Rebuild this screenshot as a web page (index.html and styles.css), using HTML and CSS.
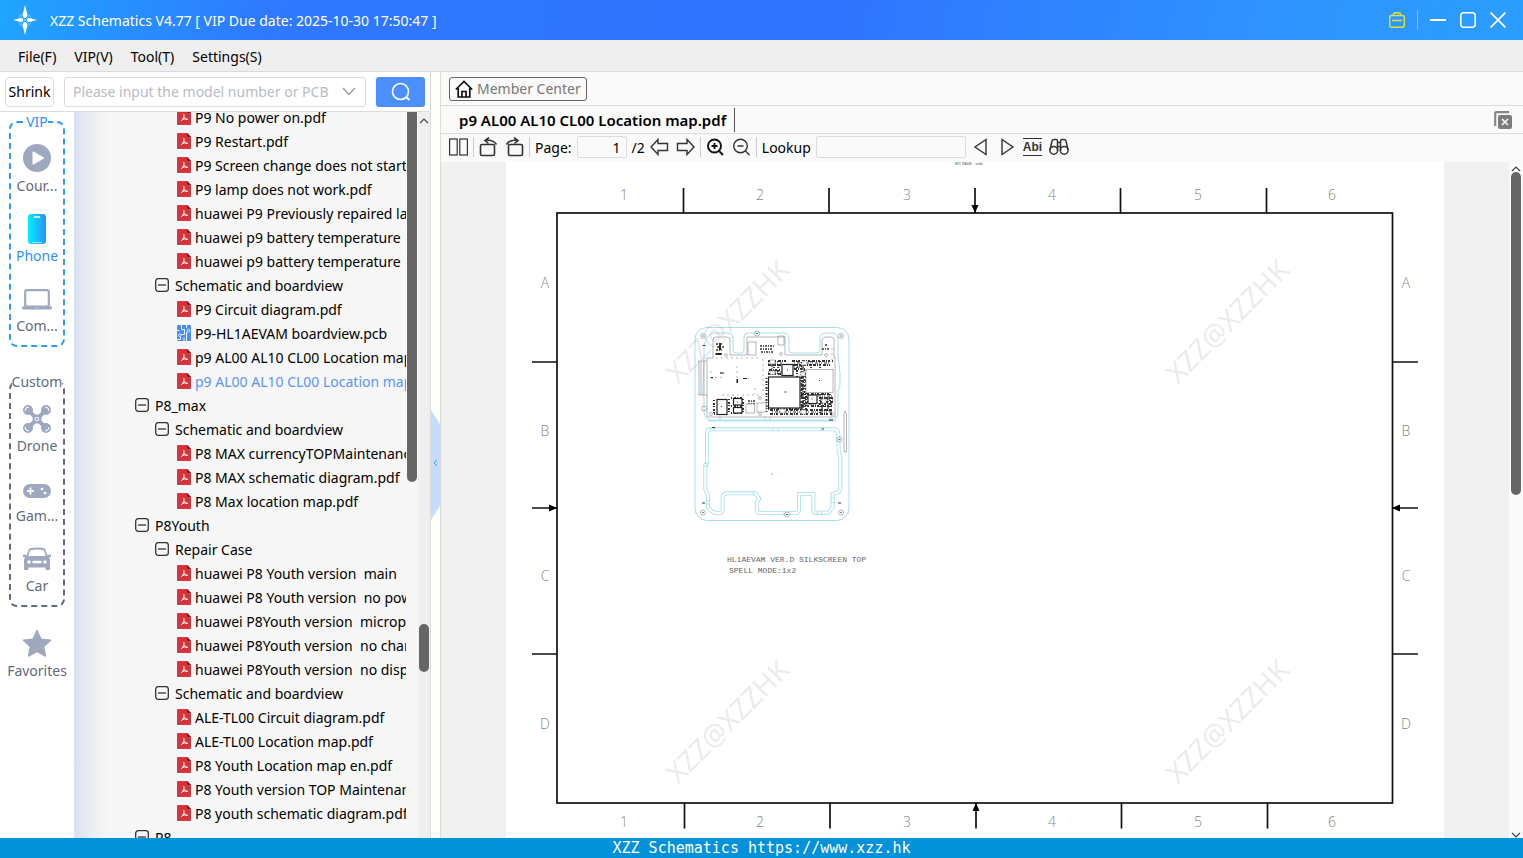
FILE: index.html
```html
<!DOCTYPE html>
<html lang="en">
<head>
  <meta charset="UTF-8">
  <meta name="viewport" content="width=device-width, initial-scale=1.0">
  <title>XZZ Schematics</title>
  <link rel="stylesheet" href="styles.css">
</head>
<body>

  <!-- Shared icons -->
  <svg class="icon-defs" width="0" height="0" aria-hidden="true">
    <symbol id="pdf" viewBox="0 0 14 16">
      <path d="M1 0H10L14 4V15Q14 16 13 16H1Q0 16 0 15V1Q0 0 1 0Z" fill="#d4343c"/>
      <path d="M10 0L14 4H11Q10 4 10 3Z" fill="#8e1118"/>
      <path d="M6.500 5Q7.500 5.500 6.800 8Q6 10.500 4 12M6.900 8Q8 10.200 10.800 10.500M5 10.800Q7.500 9.500 10.500 10.200" fill="none" stroke="#fff" stroke-width=".9"/>
    </symbol>
    <symbol id="pcb" viewBox="0 0 14 16">
      <rect width="14" height="16" rx="1" fill="#4a8ff8"/>
      <path d="M4.500 0V4.500H7.500V9.500H4M0 5.500H2.500M9.500 0V3M10.500 7.500H9.500V16M7 16V12.500M0 14.500H3.500V12" fill="none" stroke="#fff" stroke-width=".9"/>
      <circle cx="2.800" cy="10.300" r="1.200" fill="none" stroke="#fff" stroke-width=".8"/>
      <circle cx="11.500" cy="5.500" r="1.200" fill="none" stroke="#fff" stroke-width=".8"/>
    </symbol>
    <symbol id="minus" viewBox="0 0 14 14">
      <rect x=".7" y=".7" width="12.600" height="12.600" rx="2.500" fill="none" stroke="#333" stroke-width="1.300"/>
      <path d="M3 7H11" stroke="#333" stroke-width="1.300"/>
    </symbol>
    <symbol id="up" viewBox="0 0 10 6"><path d="M1 5L5 1L9 5" fill="none" stroke="#444" stroke-width="1.200"/></symbol>
    <symbol id="down" viewBox="0 0 10 6"><path d="M1 1L5 5L9 1" fill="none" stroke="#444" stroke-width="1.200"/></symbol>
  </svg>

  <div class="app">
    <header class="titlebar">
      <svg class="logo" width="26" height="30" viewBox="0 0 26 30">
        <circle cx="13" cy="15" r="6.500" fill="none" stroke="#8fd0ff" stroke-width="1" opacity=".7"/>
        <path d="M8 10L18 20M18 10L8 20" stroke="#8fd0ff" opacity=".7"/>
        <path d="M13 0L15.500 10L14 13H12L10.500 10ZM13 30L15.500 20L14 17H12L10.500 20ZM1 15L9 13L11 14V16L9 17ZM25 15L17 13L15 14V16L17 17Z" fill="#fff"/>
      </svg>
      <h1>XZZ Schematics V4.77 [ VIP Due date: 2025-10-30 17:50:47 ]</h1>
      <button class="win-btn" aria-label="Toolbox">
        <svg width="16" height="16" viewBox="0 0 16 16" fill="none" stroke="#dfe23c" stroke-width="1.400"><rect x=".7" y="3.500" width="14.600" height="11.800" rx="2"/><path d="M4.500 3.500V2.500Q4.500 .8 6 .8H10Q11.500 .8 11.500 2.500V3.500M3 8.500H13"/></svg>
      </button>
      <span class="win-line"></span>
      <button class="win-btn" aria-label="Minimize">
        <svg width="16" height="16" viewBox="0 0 16 16"><path d="M0 8H16" stroke="#fff" stroke-width="2"/></svg>
      </button>
      <button class="win-btn" aria-label="Maximize">
        <svg width="16" height="16" viewBox="0 0 16 16"><rect x=".8" y=".8" width="14.400" height="14.400" rx="3" fill="none" stroke="#fff" stroke-width="1.500"/></svg>
      </button>
      <button class="win-btn" aria-label="Close">
        <svg width="16" height="16" viewBox="0 0 16 16"><path d="M.5 .5L15.500 15.500M15.500 .5L.5 15.500" stroke="#fff" stroke-width="1.700"/></svg>
      </button>
    </header>

    <nav class="menubar">
      <button>File(F)</button>
      <button>VIP(V)</button>
      <button>Tool(T)</button>
      <button>Settings(S)</button>
    </nav>

    <main class="workspace">
      <section class="sidebar">
        <form class="search">
          <button type="button" class="shrink">Shrink</button>
          <div class="combo">
            <input type="text" placeholder="Please input the model number or PCB" aria-label="Model number">
            <button type="button" aria-label="Show history">
              <svg width="14" height="9" viewBox="0 0 14 9"><path d="M1 1L7 7.500L13 1" fill="none" stroke="#9a9ea8" stroke-width="1.500"/></svg>
            </button>
          </div>
          <button type="button" class="search-btn" aria-label="Search">
            <svg width="20" height="20" viewBox="0 0 20 20" fill="none" stroke="#fff" stroke-width="1.600"><circle cx="9.500" cy="9.500" r="8"/><path d="M15 15L18.500 18" stroke-width="2"/></svg>
          </button>
        </form>

        <div class="sidebar-body">
          <div class="rail">
            <fieldset class="group vip">
              <legend>VIP</legend>
              <button>
                <svg width="30" height="30" viewBox="0 0 30 30"><circle cx="15" cy="14" r="14" fill="#9ea8bf"/><path d="M10.500 8.500Q10.500 7 12 7.800L21.500 13.300Q22.500 14 21.500 14.800L12 20.300Q10.500 21 10.500 19.500Z" fill="#fff"/></svg>
                <span>Cour...</span>
              </button>
              <button class="active">
                <svg width="30" height="30" viewBox="0 0 30 30"><defs><linearGradient id="ph"><stop offset="0" stop-color="#00f0ff"/><stop offset="1" stop-color="#2e90fa"/></linearGradient></defs><rect x="6" width="18" height="30" rx="3" fill="url(#ph)"/><path d="M12.500 3H17.500" stroke="#fff" stroke-width="1.500" stroke-linecap="round"/><path d="M10 28.500H20" stroke="#a9dcff"/></svg>
                <span>Phone</span>
              </button>
              <button>
                <svg width="30" height="30" viewBox="0 0 30 30"><rect x="3.200" y="6.200" width="23.600" height="16.500" rx="1.500" fill="none" stroke="#9ea8bf" stroke-width="2.200"/><path d="M0 22.500H12L13 24H17L18 22.500H30V24Q30 25.500 28 25.500H2Q0 25.500 0 24Z" fill="#9ea8bf"/></svg>
                <span>Com...</span>
              </button>
            </fieldset>

            <fieldset class="group custom">
              <legend>Custom</legend>
              <button>
                <svg width="30" height="30" viewBox="0 0 30 30" fill="#9ea8bf">
                  <path d="M7 7L15 15L23 7M7 23L15 15L23 23" fill="none" stroke="#9ea8bf" stroke-width="4"/>
                  <circle cx="6" cy="6" r="5"/><circle cx="24" cy="6" r="5"/><circle cx="6" cy="24" r="5"/><circle cx="24" cy="24" r="5"/>
                  <circle cx="15" cy="15" r="4.500"/>
                  <g fill="none" stroke="#fff" stroke-width="1"><circle cx="15" cy="15" r="1.800"/><path d="M3 7A4 4 0 0 1 7 3M23 3A4 4 0 0 1 27 7M3 23A4 4 0 0 0 7 27M23 27A4 4 0 0 0 27 23"/></g>
                </svg>
                <span>Drone</span>
              </button>
              <button>
                <svg width="30" height="30" viewBox="0 0 30 30"><rect x="1" y="10" width="28" height="14" rx="7" fill="#9ea8bf"/><path d="M5 17H12M8.500 13.500V20.500" stroke="#fff" stroke-width="1.800"/><circle cx="20" cy="15" r="1.300" fill="#fff"/><circle cx="23" cy="19" r="1.300" fill="#fff"/></svg>
                <span>Gam...</span>
              </button>
              <button>
                <svg width="30" height="30" viewBox="0 0 30 30"><path fill-rule="evenodd" d="M8.500 4Q15 3 21.500 4Q23 4.300 23.600 6L25.200 11L29 10.500V13H27Q28 14.500 28 17V25Q28 26 27 26H24.500Q23.500 26 23.500 25V23.500H6.500V25Q6.500 26 5.500 26H3Q2 26 2 25V17Q2 14.500 3 13H1V10.500L4.800 11L6.400 6Q7 4.300 8.500 4ZM9 6Q8 6.200 7.700 7.200L6.300 12H23.700L22.300 7.200Q22 6.200 21 6Q15 5.200 9 6Z" fill="#9ea8bf"/><circle cx="7" cy="18" r="1.700" fill="#fff"/><circle cx="23" cy="18" r="1.700" fill="#fff"/><path d="M11.500 18H18.500" stroke="#fff" stroke-width="2.500" stroke-linecap="round"/></svg>
                <span>Car</span>
              </button>
            </fieldset>

            <button class="favorites">
              <svg width="30" height="30" viewBox="0 0 30 30"><path d="M15 1.500L19 10.200L28.500 11.300L21.500 17.700L23.400 27L15 22.400L6.600 27L8.500 17.700L1.500 11.300L11 10.200Z" fill="#9ea8bf" stroke="#9ea8bf" stroke-width="1.500" stroke-linejoin="round"/></svg>
              <span>Favorites</span>
            </button>
          </div>

          <ul class="tree">
            <li class="file"><svg><use href="#pdf"/></svg>P9 No power on.pdf</li>
            <li class="file"><svg><use href="#pdf"/></svg>P9 Restart.pdf</li>
            <li class="file"><svg><use href="#pdf"/></svg>P9 Screen change does not start up.pdf</li>
            <li class="file"><svg><use href="#pdf"/></svg>P9 lamp does not work.pdf</li>
            <li class="file"><svg><use href="#pdf"/></svg>huawei P9 Previously repaired lamp.pdf</li>
            <li class="file"><svg><use href="#pdf"/></svg>huawei p9 battery temperature</li>
            <li class="file"><svg><use href="#pdf"/></svg>huawei p9 battery temperature</li>
            <li class="folder"><svg><use href="#minus"/></svg>Schematic and boardview</li>
            <li class="file"><svg><use href="#pdf"/></svg>P9 Circuit diagram.pdf</li>
            <li class="file"><svg><use href="#pcb"/></svg>P9-HL1AEVAM boardview.pcb</li>
            <li class="file"><svg><use href="#pdf"/></svg>p9 AL00 AL10 CL00 Location map.pdf</li>
            <li class="file selected"><svg><use href="#pdf"/></svg>p9 AL00 AL10 CL00 Location map.pdf</li>
            <li class="model"><svg><use href="#minus"/></svg>P8_max</li>
            <li class="folder"><svg><use href="#minus"/></svg>Schematic and boardview</li>
            <li class="file"><svg><use href="#pdf"/></svg>P8 MAX currencyTOPMaintenance.pdf</li>
            <li class="file"><svg><use href="#pdf"/></svg>P8 MAX schematic diagram.pdf</li>
            <li class="file"><svg><use href="#pdf"/></svg>P8 Max location map.pdf</li>
            <li class="model"><svg><use href="#minus"/></svg>P8Youth</li>
            <li class="folder"><svg><use href="#minus"/></svg>Repair Case</li>
            <li class="file"><svg><use href="#pdf"/></svg>huawei P8 Youth version&nbsp; main</li>
            <li class="file"><svg><use href="#pdf"/></svg>huawei P8 Youth version&nbsp; no power.pdf</li>
            <li class="file"><svg><use href="#pdf"/></svg>huawei P8Youth version&nbsp; microphone.pdf</li>
            <li class="file"><svg><use href="#pdf"/></svg>huawei P8Youth version&nbsp; no charge.pdf</li>
            <li class="file"><svg><use href="#pdf"/></svg>huawei P8Youth version&nbsp; no display.pdf</li>
            <li class="folder"><svg><use href="#minus"/></svg>Schematic and boardview</li>
            <li class="file"><svg><use href="#pdf"/></svg>ALE-TL00 Circuit diagram.pdf</li>
            <li class="file"><svg><use href="#pdf"/></svg>ALE-TL00 Location map.pdf</li>
            <li class="file"><svg><use href="#pdf"/></svg>P8 Youth Location map en.pdf</li>
            <li class="file"><svg><use href="#pdf"/></svg>P8 Youth version TOP Maintenance.pdf</li>
            <li class="file"><svg><use href="#pdf"/></svg>P8 youth schematic diagram.pdf</li>
            <li class="model"><svg><use href="#minus"/></svg>P8</li>
          </ul>

          <div class="inner-scroll"><div class="thumb"></div></div>
          <div class="outer-scroll">
            <svg width="10" height="6"><use href="#up"/></svg>
            <div class="thumb"></div>
          </div>
        </div>
      </section>

      <div class="splitter">
        <button aria-label="Collapse sidebar">
          <svg width="9" height="110" viewBox="0 0 9 110"><path d="M0 0L9 14V96L0 110Z" fill="#c5ddfb"/><path d="M6 50L3 53L6 56" fill="none" stroke="#4a8ff8"/></svg>
        </button>
      </div>

      <section class="viewer">
        <div class="member-row">
          <button class="member">
            <svg width="18" height="18" viewBox="0 0 18 18" fill="none" stroke="#111" stroke-width="1.700"><path d="M.8 9.500L9 1.500L17.200 9.500M3.200 8V17H14.800V8M7 17V11.500H11V17"/></svg>
            Member Center
          </button>
        </div>

        <div class="tabs">
          <button class="tab">p9 AL00 AL10 CL00 Location map.pdf</button>
          <button class="close-all" aria-label="Close all tabs">
            <svg width="19" height="18" viewBox="0 0 19 18"><path d="M1.200 15V2.200Q1.200 1.200 2.200 1.200H15" fill="none" stroke="#868686" stroke-width="2.200"/><rect x="4" y="4" width="14" height="14" rx="2" fill="#7c7c7c"/><path d="M8 8L14 14M14 8L8 14" stroke="#fff" stroke-width="1.500"/></svg>
          </button>
        </div>

        <div class="toolbar">
          <button aria-label="Two pages"><svg width="19" height="18" viewBox="0 0 19 18" fill="none" stroke="#333" stroke-width="1.200"><rect x=".6" y="1" width="7.600" height="16"/><rect x="10.800" y="1" width="7.600" height="16"/></svg></button>
          <span class="sep"></span>
          <div class="tool-group">
            <button aria-label="Rotate left"><svg width="19" height="20" viewBox="0 0 19 20" fill="none" stroke="#333" stroke-width="1.600"><rect x="1.500" y="7.500" width="14" height="11" rx="1.500"/><path d="M6 3.500Q14 2 17.500 7.500M10 .5L6 3.500L9.500 6.500"/></svg></button>
            <button aria-label="Rotate right"><svg width="19" height="20" viewBox="0 0 19 20" fill="none" stroke="#333" stroke-width="1.600"><rect x="3.500" y="7.500" width="14" height="11" rx="1.500"/><path d="M13 3.500Q5 2 1.500 7.500M9 .5L13 3.500L9.500 6.500"/></svg></button>
          </div>
          <span class="sep"></span>
          <label for="page">Page:</label>
          <input id="page" class="page-input" type="text" value="1">
          <span class="total">/2</span>
          <div class="tool-group">
            <button aria-label="Previous page"><svg width="19" height="18" viewBox="0 0 19 18" fill="none" stroke="#333" stroke-width="1.400"><path d="M1 9L8 1.500V5.500H17.500V12.500H8V16.500Z"/></svg></button>
            <button aria-label="Next page"><svg width="19" height="18" viewBox="0 0 19 18" fill="none" stroke="#333" stroke-width="1.400"><path d="M18 9L11 1.500V5.500H1.500V12.500H11V16.500Z"/></svg></button>
          </div>
          <span class="sep"></span>
          <div class="tool-group">
            <button aria-label="Zoom in"><svg width="19" height="18" viewBox="0 0 19 18" fill="none" stroke="#111" stroke-width="1.900"><circle cx="8.500" cy="8" r="6.500"/><path d="M13 12.800L17 17M5.500 8H11.500M8.500 5V11"/></svg></button>
            <button aria-label="Zoom out"><svg width="19" height="18" viewBox="0 0 19 18" fill="none" stroke="#333" stroke-width="1.400"><circle cx="8.500" cy="8" r="6.800"/><path d="M13.300 12.800L17.500 17M5.500 8H11.500"/></svg></button>
          </div>
          <span class="sep"></span>
          <label for="lookup">Lookup</label>
          <input id="lookup" class="lookup-input" type="text">
          <div class="tool-group find">
            <button aria-label="Find previous"><svg width="19" height="18" viewBox="0 0 19 18"><path d="M15 1.500V16.500L4 9Z" fill="none" stroke="#333" stroke-width="1.400"/></svg></button>
            <button aria-label="Find next"><svg width="19" height="18" viewBox="0 0 19 18"><path d="M5 1.500V16.500L16 9Z" fill="none" stroke="#333" stroke-width="1.400"/></svg></button>
            <button class="abi">Abi</button>
            <button aria-label="Find all"><svg width="20" height="18" viewBox="0 0 20 18" fill="none" stroke="#333" stroke-width="1.500"><circle cx="4.800" cy="12.300" r="3.900"/><circle cx="15.200" cy="12.300" r="3.900"/><path d="M1 12L3 3Q3.500 1.500 5 1.500H7Q8.500 1.500 8.500 3V13M19 12L17 3Q16.500 1.500 15 1.500H13Q11.500 1.500 11.500 3V13M8.500 4.500H11.500M8.500 8.500H11.500"/></svg></button>
          </div>
        </div>

        <div class="canvas">
          <div class="page-area">
            <!-- Drawing sheet -->
            <svg class="sheet" viewBox="506 162 938 676">
              <text x="969" y="165" class="tiny" text-anchor="middle">MT PAGE - side</text>

              <g class="frame">
                <rect x="557" y="213" width="835.500" height="590"/>
                <path d="M683.500 188V213M829 188V213M975 188V213M1120.500 188V213M1266.500 188V213"/>
                <path d="M684.500 803V828.500M830 803V828.500M976 803V828.500M1121.500 803V828.500M1267.500 803V828.500"/>
                <path d="M532 362H557M532 508H557M532 654H557M1392 362H1418M1392 508H1418M1392 654H1418"/>
              </g>
              <path d="M975 213L971.500 205H978.500ZM976 803L972.500 811H979.500ZM557 508L549 504.500V511.500ZM1392 508L1400 504.500V511.500Z"/>

              <g class="zone">
                <text x="624" y="200">1</text><text x="760" y="200">2</text><text x="907" y="200">3</text><text x="1052" y="200">4</text><text x="1198" y="200">5</text><text x="1332" y="200">6</text>
                <text x="624" y="827">1</text><text x="760" y="827">2</text><text x="907" y="827">3</text><text x="1052" y="827">4</text><text x="1198" y="827">5</text><text x="1332" y="827">6</text>
                <text x="545" y="288">A</text><text x="545" y="436">B</text><text x="545" y="581">C</text><text x="545" y="729">D</text>
                <text x="1406" y="288">A</text><text x="1406" y="436">B</text><text x="1406" y="581">C</text><text x="1406" y="729">D</text>
              </g>

              <!-- Panel outline -->
              <rect class="panel" x="695" y="327.500" width="154" height="193" rx="12"/>
              <path class="panel" d="M704 358V345Q708 333 714 333H728Q733 334 733 338V350Q733 353 736 353H741Q744 353 744 350V337Q744 333 748 333H784Q789 333 789 338V350Q789 353 792 353H816Q820 353 820 350V337Q821 333 826 333H833Q838 334 838 340V358L840 372V384Q840 388 838 390V412Q838 419 832 420H710Q704 419 704 412V398Q702 396 703 384Z"/>
              <path class="panel" d="M708 421H836M765 417V421M770 417V421M720 417V420M830 417V420"/>
              <defs>
                <path id="slot" d="M81 130V38Q81 28 92 28H462Q475 28 475 42V60L476 95L481 112V205Q480 217 470 218L458 222V262L445 278H408Q400 278 400 270V222H357V270Q356 279 348 279H245Q232 282 231 272V245L238 236L226 220H140Q128 222 128 232V268Q127 279 116 279H108Q96 278 84 262V225L76 208V135Z"/>
              </defs>
              <g transform="translate(680 420) scale(.3333)">
                <use href="#slot" class="slot"/>
                <use href="#slot" class="slot-in"/>
                <path class="panel-fine" d="M278 25V33M295 25V33M92 22V33M105 22V33M424 22V33M72 130H84M72 138H84M78 242H90M78 252H90M412 273V285M424 273V285M452 234H464M452 248H464M312 273V285M220 215V226"/>
              </g>

              <!-- Board -->
              <path class="board" d="M707 358H713V340Q713 337 716 337H727Q730 337 730 340V355H747V337H785V355H822V340Q823 337 826 337H831Q834 337 834 340V357H835V417H707Z"/>
              <path class="board" d="M698 361H707M698 395H707M699 361V395M701 361V395M704 361V395M748 342H756V355H748ZM778 336H784V345H778ZM844 452V414L845 411L846.500 414V452Z"/>
              <g class="marks">
                <circle cx="703" cy="336" r="2.500"/><circle cx="757" cy="333.500" r="2.500"/><circle cx="841" cy="336" r="2.500"/><circle cx="704" cy="408.500" r="2.500"/>
                <circle cx="703" cy="512.500" r="2.500"/><circle cx="841" cy="512.500" r="2.500"/><circle cx="787" cy="514.500" r="2.500"/><circle cx="839.500" cy="439.500" r="2.500"/>
                <circle cx="726" cy="355" r="1.500"/><circle cx="826" cy="355" r="1.500"/><circle cx="711" cy="414" r="1.500"/><circle cx="832" cy="414" r="1.500"/><circle cx="781" cy="354" r="1.500"/><circle cx="760" cy="398" r="1.500"/><circle cx="760" cy="414" r="1.500"/>
                <path d="M702 336H704M756 333.500H758M840 336H842M702 512.500H704M840 512.500H842M786 514.500H788M838.500 439.500H840.500" stroke="#222"/>
              </g>

              <!-- Dense small parts around the chips -->
              <g class="parts">
                <path stroke-dasharray="3 1 1 1 2 2" d="M768 361H786M768 365H781M769 370H780M768 374H782M792 361H833M793 365H830M794 369H805M801 374H806M801 377H806M801 381H806M801 385H806M801 389H806M801 394H830M801 398H808M801 402H808M801 406H832M770 410H832M770 414H832M820 398H833M820 402H833"/>
                <path stroke-dasharray="1 2 2 1" d="M766.500 378V412M801.500 362V412M804.500 370V412M806 393V414M820 394V414M825 394V412M830 394V412M774 361V375M778 361V375M797 361V377M811 361V369M820 361V369M768 409H801M714 400V413M729 399V413M743 399V413M731 398H743M731 406H743M731 413H743M714 414H728"/>
                <path stroke-dasharray="2 1 1 1" stroke-width="1.300" d="M716 344H722M717 347H725M716 350H722M718 354H722M760 346H774M760 349H772M761 352H774M822 349H830M825 345H828M748 401H755M748 404H755"/>
                <path stroke-dasharray="1 2 3 1 1 1" stroke-width="1.200" d="M768 363H782M794 363H830M794 367H806M768 372H782M806 396H832M820 400H833M806 404H833M772 412H832M803 364V414M822 394V412M828 394V412M772 361V375"/>
              </g>
              <path class="hair" stroke-dasharray="2 3" d="M710 377.500H724M737 366V384M743 378.500H749M763 359V395M755 388V394M832 348V360M716 358H760M722 395H762M710 372H713M720 373H724"/>
              <path d="M715.500 353H721V355H715.500ZM719 343H721V350H719ZM711 377H713V378.300H711ZM720 372.500H724V373.500H720ZM736.500 379H738V383H736.500ZM743 378H747V379H743Z" fill="#222"/>

              <g class="chip">
                <rect x="768.500" y="377" width="31.500" height="31"/><rect x="782" y="364.500" width="11" height="11"/><rect x="808" y="395" width="9" height="8.500"/>
                <rect x="717" y="399.500" width="10" height="15"/><rect x="733.500" y="398.500" width="8.500" height="6.500"/><rect x="733.500" y="407.500" width="8.500" height="5.500"/>
              </g>
              <g class="board fill">
                <rect x="806" y="369.500" width="27" height="23"/>
                <rect x="746" y="404" width="8.500" height="9"/><rect x="757" y="403" width="9" height="9"/><rect x="770" y="360" width="5" height="4"/><rect x="770" y="371" width="5" height="3.500"/><rect x="802" y="361" width="5" height="4"/><rect x="801" y="372" width="4" height="4"/><rect x="780" y="409" width="5" height="4"/><rect x="801" y="410" width="5" height="4"/><rect x="822" y="399" width="4" height="4"/>
              </g>
              <path d="M784.500 392H786.500M819 380.500H820M787 370H788M811.500 399H812.500M721 406.500H722M737 402H738M712 427.500H715M822 429H824M702.500 345.500H705.500M702 503H705M838 503H841M829 420H833" stroke="#333"/>
              <path d="M771.500 474H773" stroke="#f9a" stroke-width="1.500"/>

              <g class="silk">
                <text x="727" y="562">HL1AEVAM VER.D SILKSCREEN TOP</text>
                <text x="729" y="573">SPELL MODE:1x2</text>
              </g>

              <g class="watermark">
                <text transform="translate(678 385) rotate(-45)">XZZ@XZZHK</text>
                <text transform="translate(1178 385) rotate(-45)">XZZ@XZZHK</text>
                <text transform="translate(678 785) rotate(-45)">XZZ@XZZHK</text>
                <text transform="translate(1178 785) rotate(-45)">XZZ@XZZHK</text>
              </g>
            </svg>
          </div>
          <div class="page-scroll">
            <svg width="10" height="6"><use href="#up"/></svg>
            <div class="thumb"></div>
            <svg class="bottom" width="10" height="6"><use href="#down"/></svg>
          </div>
        </div>
      </section>
    </main>

    <footer>XZZ Schematics https://www.xzz.hk</footer>
  </div>

</body>
</html>
```
FILE: styles.css
```css
* {
  box-sizing: border-box;
}

body {
  margin: 0;
  font-family: "Noto Sans", "Open Sans", sans-serif;
  font-size: 14px;
  color: #000;
}

button,
input {
  font: inherit;
  color: inherit;
}

button {
  padding: 0;
  border: none;
  background: none;
  cursor: pointer;
}

svg {
  display: block;
  flex: none;
}

.icon-defs {
  position: absolute;
}

.app {
  display: flex;
  flex-direction: column;
  height: 100vh;
}

/* Title bar */
.titlebar {
  display: flex;
  align-items: center;
  flex: none;
  gap: 14px;
  height: 40px;
  padding: 0 17px 0 12px;
  color: #fff;
  background: linear-gradient(100deg, #1fa5ff 0%, #2f78ff 18%, #2f74ff 55%, #2f92ff 82%, #2a9eff 100%);
}

.titlebar h1 {
  flex: 1;
  margin: 0 0 0 -2px;
  font-size: 14px;
  font-weight: 400;
}

.win-line {
  width: 1px;
  height: 20px;
  margin: 0 -2px;
  background: #7fbcff;
}

/* Menu bar */
.menubar {
  display: flex;
  flex: none;
  gap: 18px;
  height: 32px;
  padding: 2px 18px 0;
  background: #efefef;
  border-bottom: 1px solid #dadada;
}

.workspace {
  display: flex;
  flex: 1;
  min-height: 0;
}

/* Sidebar */
.sidebar {
  display: flex;
  flex-direction: column;
  flex: none;
  width: 431px;
  border-right: 1px solid #dcdcdc;
}

.search {
  display: flex;
  align-items: center;
  flex: none;
  gap: 10px;
  height: 40px;
  padding: 0 5px;
  background: #fff;
  border-bottom: 1px solid #dcdcdc;
}

.shrink {
  width: 49px;
  height: 30px;
  border: 1px solid #dcdcdc;
  border-radius: 4px;
}

.combo {
  display: flex;
  align-items: center;
  flex: 1;
  height: 30px;
  padding: 0 9px 0 8px;
  border: 1px solid #dcdcdc;
  border-radius: 3px;
}

.combo input {
  flex: 1;
  min-width: 0;
  padding: 0;
  border: none;
  outline: none;
  background: none;
}

.combo input::placeholder {
  color: #b9bcc2;
}

.search-btn {
  display: flex;
  align-items: center;
  justify-content: center;
  width: 49px;
  height: 30px;
  border-radius: 3px;
  background: #4c90ff;
}

.sidebar-body {
  display: flex;
  flex: 1;
  min-height: 0;
}

.rail {
  flex: none;
  width: 74px;
  padding: 0 9px;
  color: #5f6b80;
  background: #fff;
}

.group {
  min-width: 0;
  margin: 0;
  padding: 0 0 3px;
  border: 2px dashed #5f6b80;
  border-radius: 8px;
}

.group legend {
  height: 20px;
  margin: 0 auto;
  padding: 0;
  line-height: 20px;
}

.vip {
  border-color: #2e9bfa;
}

.vip legend,
.rail .active {
  color: #2e90fa;
}

.custom {
  margin-top: 25px;
}

.rail button {
  display: flex;
  flex-direction: column;
  align-items: center;
  gap: 2px;
  width: 100%;
  height: 70px;
  padding-top: 12px;
  line-height: 20px;
}

.rail .favorites {
  margin-top: 10px;
}

/* File tree */
.tree {
  flex: 1;
  min-width: 0;
  margin: 0;
  padding: 0;
  overflow: hidden;
  list-style: none;
  background: linear-gradient(90deg, #d8e1f1, #e6eaf2 12px, #f7f7f7 34px);
}

.tree li {
  display: flex;
  align-items: center;
  height: 24px;
  overflow: hidden;
  white-space: nowrap;
}

.tree li:first-child {
  margin-top: -7px;
}

.tree svg {
  width: 14px;
  height: 16px;
}

.model {
  gap: 6px;
  padding-left: 61px;
}

.folder {
  gap: 6px;
  padding-left: 81px;
}

.file {
  gap: 4px;
  padding-left: 103px;
}

.selected {
  color: #5a94f5;
}

/* Scrollbars */
.thumb {
  background: #666;
  border-radius: 5px;
}

.inner-scroll {
  width: 12px;
  padding-left: 1px;
  background: #f7f7f7;
}

.inner-scroll .thumb {
  width: 10px;
  height: 51%;
  border-radius: 0 0 5px 5px;
}

.outer-scroll,
.page-scroll {
  display: flex;
  flex-direction: column;
  align-items: center;
  flex: none;
  width: 12px;
  padding-top: 6px;
  background: #efefef;
}

.outer-scroll .thumb {
  width: 10px;
  height: 48px;
  margin-top: 500px;
}

.splitter {
  display: flex;
  align-items: center;
  flex: none;
  width: 10px;
  padding-top: 20px;
  background: #fcfffa;
  border-right: 1px solid #dcdcdc;
}

/* Viewer */
.viewer {
  display: flex;
  flex-direction: column;
  flex: 1;
  min-width: 0;
  background: #fafafa;
}

.member-row {
  display: flex;
  align-items: center;
  flex: none;
  height: 34px;
  padding: 0 8px;
  border-bottom: 1px solid #dcdcdc;
}

.member {
  display: flex;
  align-items: center;
  gap: 4px;
  height: 24px;
  padding: 0 5px;
  color: #777;
  border: 1px solid #666;
  border-radius: 3px;
}

.tabs {
  display: flex;
  align-items: center;
  justify-content: space-between;
  flex: none;
  height: 28px;
  padding-right: 10px;
  border-bottom: 1px solid #dcdcdc;
}

.tab {
  height: 24px;
  padding: 0 8px 0 18px;
  font-size: 15px;
  font-weight: 600;
  border-right: 1px solid #555;
}

.toolbar {
  display: flex;
  align-items: center;
  flex: none;
  gap: 5px;
  height: 28px;
  padding: 0 8px 2px;
}

.tool-group {
  display: flex;
  gap: 7px;
}

.sep {
  width: 1px;
  height: 20px;
  background: #ccc;
}

.toolbar input {
  height: 22px;
  padding: 0 5px;
  border: 1px solid #dcdcdc;
  border-radius: 2px;
  background: #fafafa;
}

.page-input {
  width: 50px;
  text-align: right;
}

.lookup-input {
  width: 150px;
}

.abi {
  font: 700 12px "Liberation Sans", sans-serif;
  color: #333;
  border-top: 1px solid #333;
  border-bottom: 1px solid #333;
}

.canvas {
  display: flex;
  flex: 1;
  min-height: 0;
}

.page-area {
  flex: 1;
  min-width: 0;
  overflow: hidden;
  background: #f0f0f0;
}

.sheet {
  width: 88%;
  max-width: 938px;
  margin: 0 auto;
  background: #fff;
}

.page-scroll {
  width: 14px;
  padding-top: 4px;
  background: #fafafa;
}

.page-scroll .thumb {
  width: 10px;
  height: 48%;
}

.page-scroll .bottom {
  margin-top: auto;
}

/* Drawing */
.frame {
  fill: none;
  stroke: #111;
  stroke-width: 1.7;
}

.zone {
  font-family: "Open Sans", sans-serif;
  font-size: 14px;
  font-weight: 300;
  text-anchor: middle;
  fill: #888;
}

.tiny {
  font-size: 4px;
  fill: #555;
}

.panel {
  fill: none;
  stroke: #a5dfee;
}

.slot {
  fill: none;
  stroke: #a5dfee;
  stroke-width: 12;
}

.slot-in {
  fill: none;
  stroke: #fff;
  stroke-width: 7;
}

.panel-fine {
  stroke: #8fd5e8;
  stroke-width: 2;
}

.board,
.marks,
.hair {
  fill: none;
  stroke: #888;
  stroke-width: .6;
}

.fill {
  fill: #fff;
}

.parts {
  fill: none;
  stroke: #333;
  stroke-width: 2;
}

.chip {
  fill: #fff;
  stroke: #222;
  stroke-width: 1.2;
}

.silk {
  font-family: "Liberation Mono", monospace;
  font-size: 8px;
  fill: #666;
}

.watermark {
  font-size: 28px;
  fill: #888;
  fill-opacity: .18;
}

footer {
  flex: none;
  height: 20px;
  font: 15px/20px "DejaVu Sans Mono", monospace;
  text-align: center;
  color: #fff;
  background: #0391da;
}
```
